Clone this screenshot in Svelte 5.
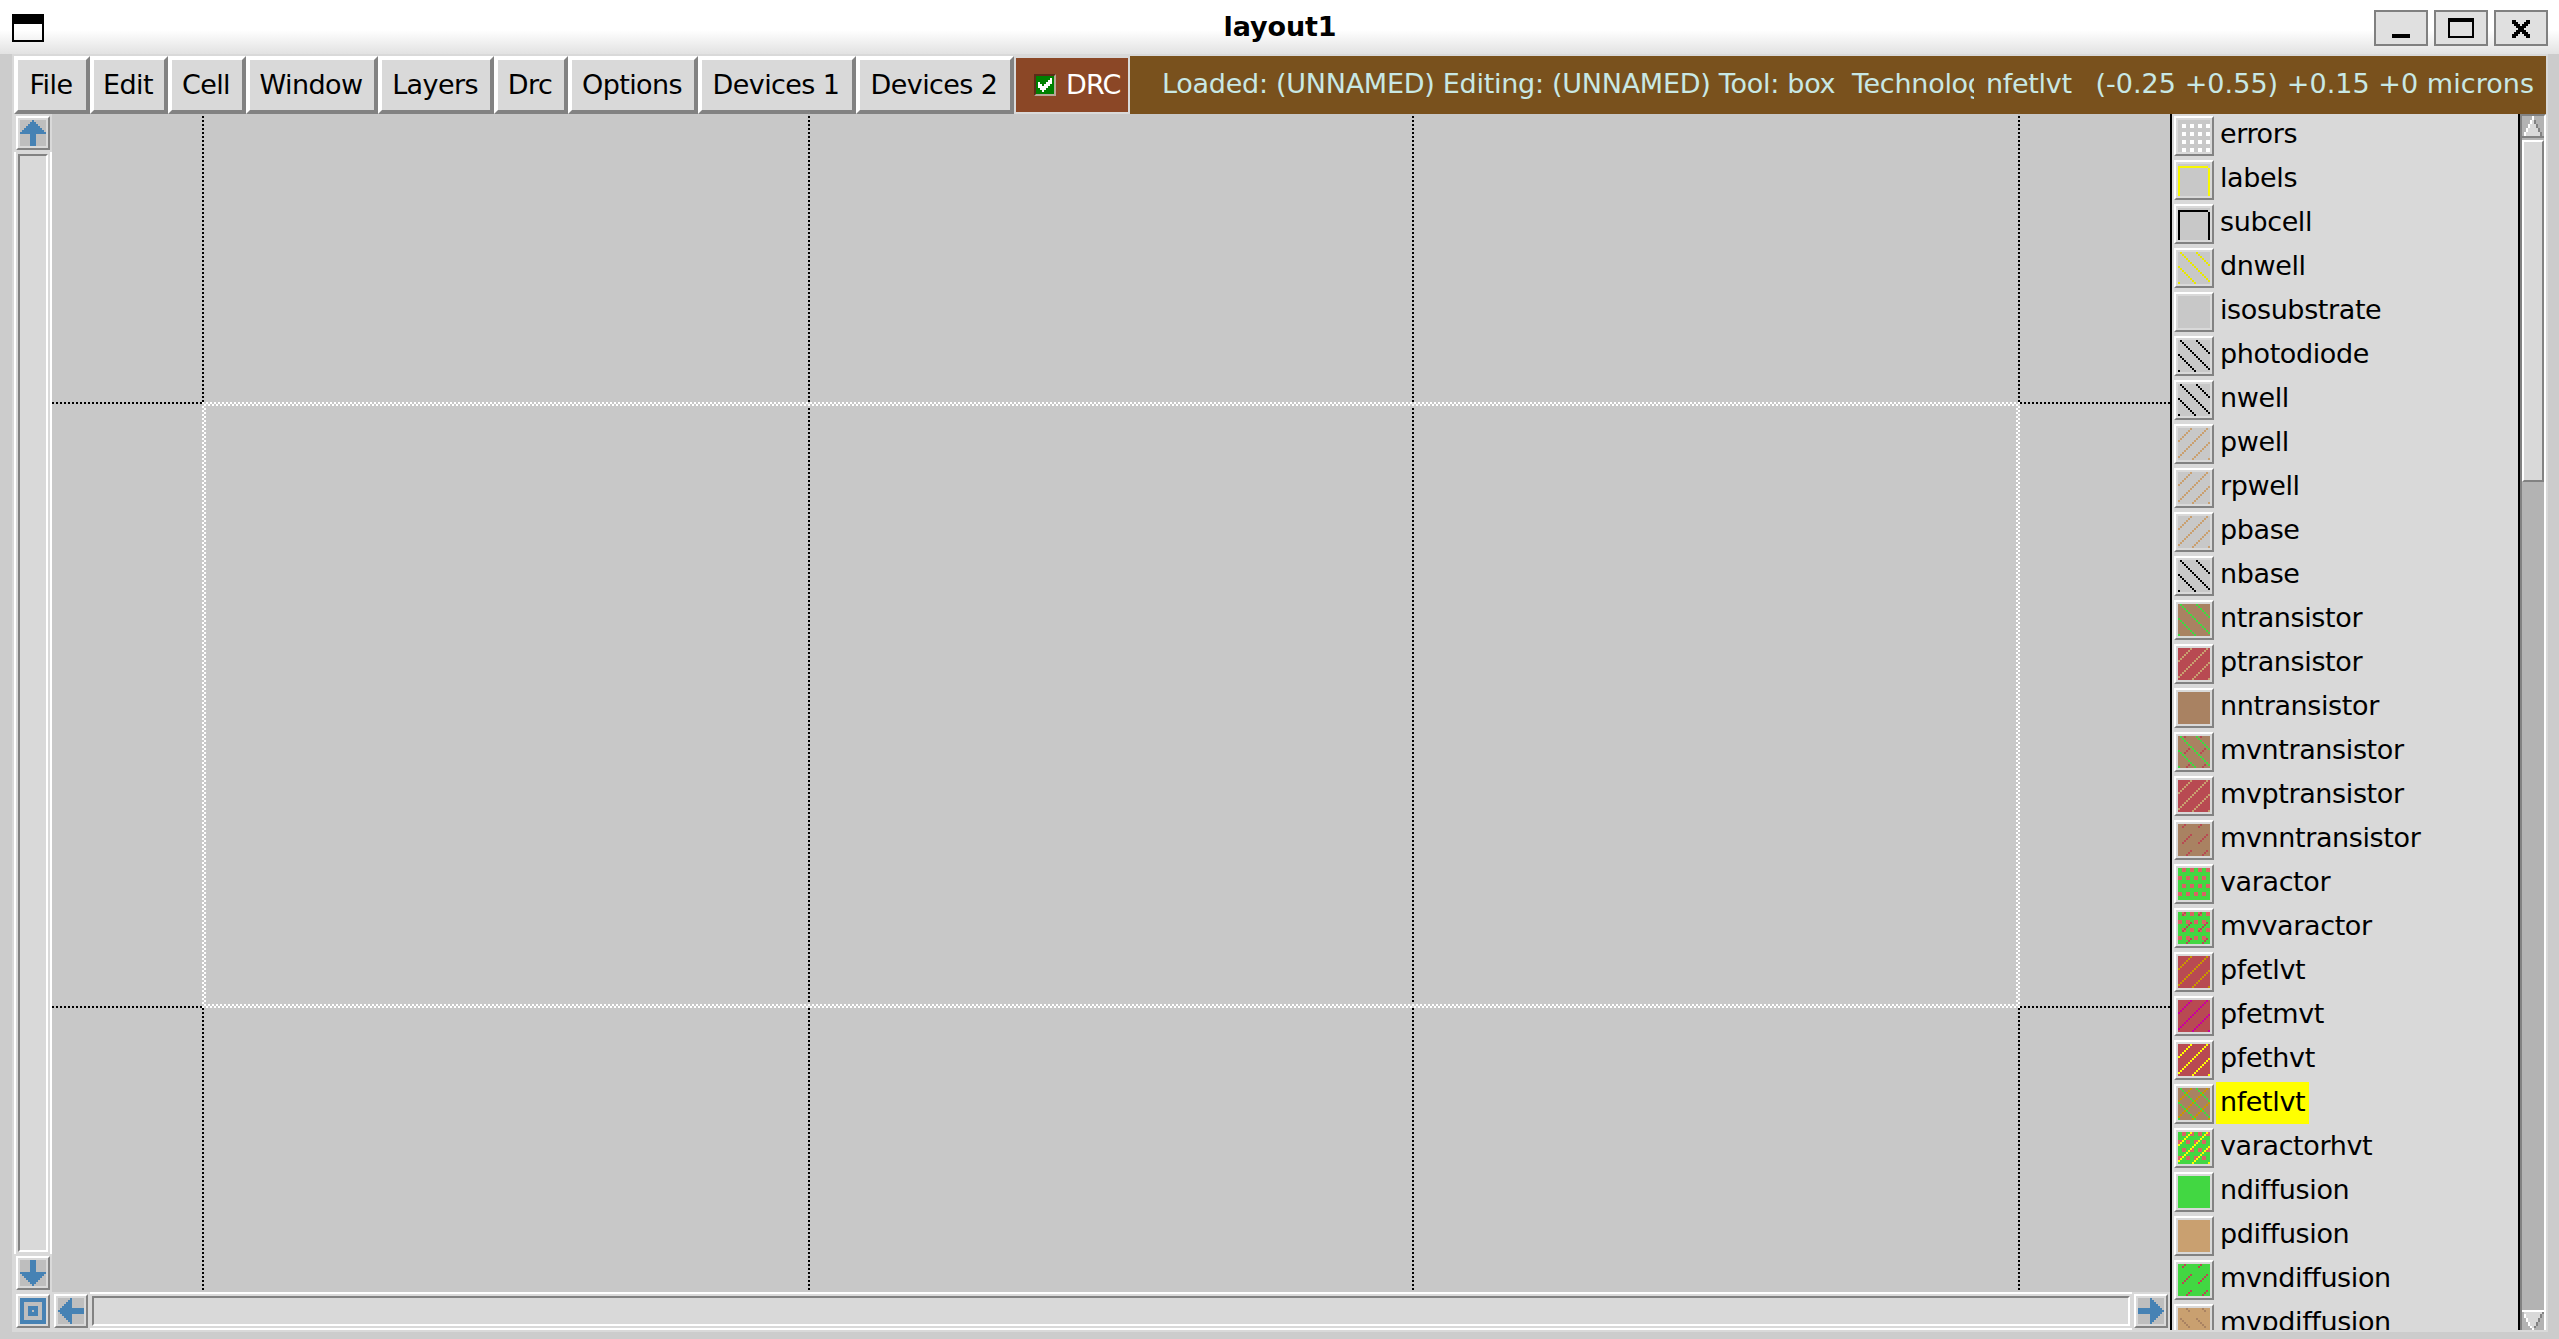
<script>
  const menus = [
    ['File', 76], ['Edit', 78], ['Cell', 78], ['Window', 132], ['Layers', 116], ['Drc', 74],
    ['Options', 130], ['Devices 1', 158], ['Devices 2', 158]
  ];

  const gray = '#c8c8c8', brown = '#a98262', red = '#b84a52', green = '#42d742';
  const tan = '#c9a070', pink = '#d96464', gold = '#c99600', yellow = '#ffff00';

  const layers = [
    ['errors', gray, [['grid', '#fff']]],
    ['labels', gray, [['box', '#f8f800']]],
    ['subcell', gray, [['box', '#000']]],
    ['dnwell', gray, [['down', '#e8e800']]],
    ['isosubstrate', gray, []],
    ['photodiode', gray, [['down', '#000']]],
    ['nwell', gray, [['down', '#000']]],
    ['pwell', gray, [['up', tan]]],
    ['rpwell', gray, [['up', tan]]],
    ['pbase', gray, [['up', tan]]],
    ['nbase', gray, [['down', '#000']]],
    ['ntransistor', brown, [['down', green]]],
    ['ptransistor', red, [['up', tan]]],
    ['nntransistor', brown, []],
    ['mvntransistor', brown, [['dashUp', red], ['down', green]]],
    ['mvptransistor', red, [['up', tan]]],
    ['mvnntransistor', brown, [['dashUp', red]]],
    ['varactor', green, [['stipple', pink]]],
    ['mvvaractor', green, [['stipple', pink], ['dashUp', red]]],
    ['pfetlvt', red, [['up', gold]]],
    ['pfetmvt', red, [['up', '#c900a0']]],
    ['pfethvt', red, [['up', yellow]]],
    ['nfetlvt', brown, [['up', gold], ['down', green]]],
    ['varactorhvt', green, [['stipple', pink], ['up', yellow]]],
    ['ndiffusion', green, []],
    ['pdiffusion', tan, []],
    ['mvndiffusion', green, [['dashUp', red]]],
    ['mvpdiffusion', tan, [['dashDown', brown]]]
  ];

  // Each test says whether a cell of the 16x16 swatch is inked.
  const mod = (n, m) => ((n % m) + m) % m;
  const tests = {
    grid: (x, y) => x % 4 >= 2 && y % 4 >= 2,
    box: (x, y) => (y === 1 && x < 15) || (y >= 1 && x === 0) || (y >= 2 && x === 15),
    down: (x, y) => mod(x - y, 8) === 1,
    up: (x, y) => mod(x + y, 8) === 6,
    dashUp: (x, y) => mod(x + y, 8) === 3 && [0, 1, 5, 6, 7].includes(y % 8),
    dashDown: (x, y) => mod(x - y, 8) === 4 && [0, 1, 5, 6, 7].includes(y % 8),
    stipple: (x, y) => y % 4 < 2 && (y % 8 < 4 ? x % 4 >= 2 : x % 4 < 2)
  };
  function pattern(kind) {
    let d = '';
    for (let y = 0; y < 16; y++)
      for (let x = 0; x < 16; x++) if (tests[kind](x, y)) d += `M${x} ${y}h1v1h-1z`;
    return d;
  }

  const arrow = 'M6 0h1v1h1v1h1v1h1v1h1v1h1v1h1v1H8v6H5V7H0V6h1V5h1V4h1V3h1V2h1V1h1z';
</script>

{#snippet arrowButton(kind)}
  <button class="tool {kind}" aria-label={kind}>
    <svg viewBox="0 0 13 13" shape-rendering="crispEdges">
      {#if kind === 'center'}
        <path fill-rule="evenodd" d="M0 0h13v13H0zM2 2v9h9V2zM4 4h5v5H4zM6 6v1h1V6z" />
      {:else}
        <path d={arrow} />
      {/if}
    </svg>
  </button>
{/snippet}

<div class="window">
  <header class="title">
    <svg class="sys" viewBox="0 0 32 34" shape-rendering="crispEdges"><path fill-rule="evenodd" d="M0 0h32v28H0zM2 10v16h28V10z" /></svg>
    <h1>layout1</h1>
    <div class="controls">
      <button aria-label="minimize"><svg viewBox="0 0 50 32" shape-rendering="crispEdges"><path d="M16 22h18v4H16z" /></svg></button>
      <button aria-label="maximize"><svg viewBox="0 0 50 32" shape-rendering="crispEdges"><path fill-rule="evenodd" d="M12 6h26v20H12zM14 10v14h22V10z" /></svg></button>
      <button aria-label="close"><svg viewBox="0 0 50 32" shape-rendering="crispEdges"><path d="M16 8h4v2h2v2h2v2h2v-2h2v-2h2V8h4v4h-2v2h-2v2h-2v2h2v2h2v2h2v4h-4v-2h-2v-2h-2v-2h-2v2h-2v2h-2v2h-4v-4h2v-2h2v-2h2v-2h-2v-2h-2v-2h-2z" /></svg></button>
    </div>
  </header>

  <div class="frame">
    <nav class="menubar">
      {#each menus as [name, width]}
        <button class="menu" style:width="{width}px">{name}</button>
      {/each}
      <label class="drc">
        <span class="check"><svg viewBox="0 0 9 9" shape-rendering="crispEdges"><path d="M1 3h1v1h1v1h1V4h1V3h1V2h1V1h1v3H7v1H6v1H5v1H4v1H3V7H2V6H1z" /></svg></span>DRC
      </label>
      <div class="status">
        <span class="loaded">Loaded: (UNNAMED) Editing: (UNNAMED) Tool: box&nbsp; Technology</span>
        <span class="layer">nfetlvt</span>
        <span class="coords">(-0.25 +0.55) +0.15 +0 microns</span>
      </div>
    </nav>

    <div class="body">
      <div class="workspace">
        <div class="upper">
          <div class="vscroll">
            {@render arrowButton('up')}
            <div class="vtrack"><div class="thumb"></div></div>
            {@render arrowButton('down')}
          </div>
          <svg class="canvas" viewBox="52 114 2118 1178" shape-rendering="crispEdges">
            <defs>
              <pattern id="checker" x="202" y="402" width="4" height="4" patternUnits="userSpaceOnUse">
                <path d="M0 0h2v2H0zM2 2h2v2H2z" fill="#fff" />
              </pattern>
            </defs>
            <g class="gridlines">
              <path d="M203 116V1290M809 116V1290M1413 116V1290M2019 116V1290" />
              <path d="M52 403H2170M52 1007H2170" />
            </g>
            <path class="cursor-bg" d="M204 404H2018V1006H204z" />
            <path fill="url(#checker)" fill-rule="evenodd" d="M202 402H2020V1008H202zM206 406V1004H2016V406z" />
          </svg>
        </div>
        <div class="hscroll">
          {@render arrowButton('center')}
          {@render arrowButton('left')}
          <div class="htrack"><div class="thumb"></div></div>
          {@render arrowButton('right')}
        </div>
      </div>

      <aside>
        <ul>
          {#each layers as [name, base, inks]}
            <li>
              <span class="swatch">
                <svg viewBox="0 0 16 16" shape-rendering="crispEdges">
                  <rect width="16" height="16" fill={base} />
                  {#each inks as [kind, color]}<path d={pattern(kind)} fill={color} />{/each}
                </svg>
              </span>
              <span class="name" class:active={name === 'nfetlvt'}>{name}</span>
            </li>
          {/each}
        </ul>
      </aside>

      <div class="sidescroll">
        <svg viewBox="0 0 11 12" height="24" shape-rendering="crispEdges">
          <path fill="#d9d9d9" d="M5 1h1v2h1v2h1v2h1v2h1v2H1V9h1V7h1V5h1V3h1z" />
          <path fill="#fff" d="M5 0h1v2H5zM4 2h1v2H4zM3 4h1v2H3zM2 6h1v2H2zM1 8h1v2H1zM0 10h1v1H0z" />
          <path fill="#828282" d="M6 2h1v2H6zM7 4h1v2H7zM8 6h1v2H8zM9 8h1v2H9zM0 11h11v-1H0z" />
        </svg>
        <div class="sidethumb"></div>
        <svg class="end" viewBox="0 0 11 10" height="20" shape-rendering="crispEdges">
          <path fill="#d9d9d9" d="M1 1h9v2H9v2H8v2H7v2H4V7H3V5H2V3H1z" />
          <path fill="#828282" d="M10 1h1v1h-1zM9 2h1v2H9zM8 4h1v2H8zM7 6h1v2H7zM6 8h1v1H6z" />
          <path fill="#fff" d="M0 0h11v1H0zM1 2h1v2H1zM2 4h1v2H2zM3 6h1v2H3zM4 8h1v1H4zM5 9h1v1H5z" />
        </svg>
      </div>
    </div>
  </div>
</div>

<style>
  :global(body) { overflow: hidden; }
  .window {
    box-sizing: border-box; width: 2559px; height: 1339px; background: #ccc;
    font: 27px/30px "DejaVu Sans", sans-serif; color: #000;
  }
  button { box-sizing: border-box; margin: 0; padding: 0; border-radius: 0; font: inherit; color: inherit; }
  svg { display: block; }

  .title {
    display: flex; align-items: flex-start; justify-content: space-between; box-sizing: border-box;
    height: 54px; padding: 10px 11px 0 12px;
    background: linear-gradient(#fff 30px, #e2e2e2 54px);
  }
  .title h1 { margin: 2px 0 0 142px; font-size: 27px; line-height: 30px; font-weight: bold; letter-spacing: -0.1px; }
  .sys { width: 32px; height: 34px; margin-top: 4px; }
  .controls { display: flex; gap: 6px; }
  .controls button { width: 54px; height: 36px; border: 2px solid #808080; background: #e0e0e0; }
  .controls svg { width: 50px; height: 32px; }

  .frame {
    display: flex; flex-direction: column; box-sizing: border-box; width: 2536px; height: 1278px;
    margin-left: 12px; padding: 2px 2px 2px 0; background: #d9d9d9;
  }
  .menubar { display: flex; flex: none; height: 58px; padding-left: 2px; }
  .menu {
    flex: none; border: solid; border-width: 4px; padding: 0 2px 1px 0; text-align: center;
    letter-spacing: -0.6px; white-space: nowrap;
    border-color: #fff #828282 #828282 #fff; background: #d9d9d9;
  }
  .drc {
    display: flex; align-items: center; box-sizing: border-box; flex: none; width: 112px; height: 54px;
    margin: 2px 2px 0; padding: 0 0 1px 18px; background: #8b4726; color: #fff; letter-spacing: -0.8px;
  }
  .check {
    box-sizing: border-box; flex: none; width: 22px; height: 22px; margin: 1px 10px 0 0; border: 2px solid;
    border-color: #5a2d18 #b8a898 #b8a898 #5a2d18; background: #008000;
  }
  .check svg { width: 18px; height: 18px; fill: #fff; }
  .status {
    display: flex; align-items: center; flex: 1; min-width: 0; box-sizing: border-box;
    padding: 0 12px 2px 32px; background: #79511d; color: #c8e8e4; white-space: pre;
  }
  .loaded { flex: none; width: 812px; overflow: hidden; letter-spacing: -0.27px; }
  .layer { margin-left: 12px; letter-spacing: -0.3px; }
  .coords { margin-left: auto; letter-spacing: 0.04px; }

  .body { display: flex; flex: 1; min-height: 0; }
  .workspace { display: flex; flex-direction: column; width: 2158px; }
  .upper { display: flex; height: 1178px; }
  .vscroll { display: flex; flex-direction: column; align-items: center; gap: 2px; box-sizing: border-box; width: 40px; padding: 2px 0 2px 2px; }
  .tool {
    flex: none; width: 34px; height: 34px; padding: 2px; border: 2px solid;
    border-color: #fff #828282 #828282 #fff; background: #d9d9d9;
  }
  .tool svg { width: 26px; height: 26px; background: #bebebe; fill: #4682b4; }
  .down svg { transform: rotate(180deg); }
  .left svg { transform: rotate(-90deg); }
  .right svg { transform: rotate(90deg); }
  .vtrack { box-sizing: border-box; flex: 1; width: 38px; padding: 2px 0; border: solid #fff; border-width: 0 2px; }
  .thumb { box-sizing: border-box; width: 100%; height: 100%; border: 2px solid; border-color: #828282 #fff #fff #828282; }
  .vtrack .thumb { width: 30px; margin-left: 2px; }
  .canvas { width: 2118px; height: 1178px; background: #c8c8c8; }
  .gridlines path { stroke: #000; stroke-width: 2; stroke-dasharray: 2 2; }
  .cursor-bg { fill: none; stroke: #c8c8c8; stroke-width: 4; }
  .hscroll { display: flex; align-items: center; flex: none; height: 38px; padding-left: 4px; }
  .htrack { box-sizing: border-box; width: 2042px; height: 38px; margin: 0 2px; padding: 2px; border: solid #fff; border-width: 2px 0; }
  .center { margin-right: 4px; }

  aside { box-sizing: border-box; width: 350px; height: 1216px; overflow: hidden; border: solid #000; border-width: 0 2px; }
  ul { margin: 0; padding: 0 0 0 2px; list-style: none; }
  li { display: flex; height: 44px; }
  .swatch {
    box-sizing: border-box; flex: none; width: 40px; height: 40px; margin: 2px 2px 0 0; padding: 2px;
    border: 2px solid; border-color: #fff #828282 #828282 #fff;
  }
  .swatch svg { width: 32px; height: 32px; }
  .name { height: 42px; padding: 0 4px; line-height: 40px; letter-spacing: -0.38px; }
  .active { background: #ff0; }

  .sidescroll {
    display: flex; flex-direction: column; box-sizing: border-box; width: 26px; height: 1216px;
    border: solid; border-width: 2px 2px 0; border-color: #828282 #fff #fff #828282; background: #b3b3b3;
  }
  .sidethumb { box-sizing: border-box; width: 22px; height: 342px; border: 2px solid; border-color: #fff #828282 #828282 #fff; background: #d9d9d9; }
  .end { margin-top: auto; }
</style>
